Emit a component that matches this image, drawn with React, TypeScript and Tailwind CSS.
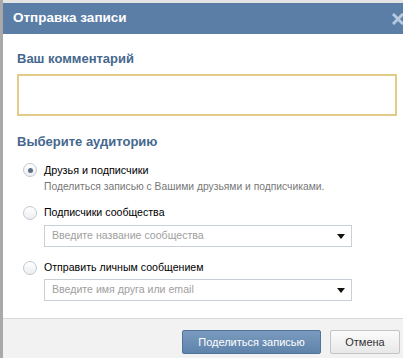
import React from 'react'

const font = { fontFamily: '"Liberation Sans", Arial, sans-serif' }

// Radio button circle, VK-style
const Radio = ({ checked }: { checked?: boolean }) => (
  <span className="flex h-[14px] w-[14px] shrink-0 items-center justify-center rounded-full border border-[#c3c8ce] bg-gradient-to-b from-[#ffffff] to-[#eceef1]">
    {checked && <span className="h-[5px] w-[5px] rounded-full bg-[#5c6f85]" />}
  </span>
)

const FakeSelect = ({ placeholder }: { placeholder: string }) => (
  <div className="flex h-[22px] w-[308px] items-center justify-between border border-[#c9cfd6] bg-white pl-[7px] pr-[6px]">
    <span className="text-[10.6px] text-[#a0a0a0]">{placeholder}</span>
    <svg width="8" height="5" viewBox="0 0 8 5">
      <path d="M0 0 H8 L4 5 Z" fill="#111" />
    </svg>
  </div>
)

export default function App() {
  return (
    <div className="h-[358px] w-[403px] overflow-hidden bg-[#e4e4e4]" style={font}>
      <div className="flex h-full">
        {/* page behind the dim */}
        <div className="w-[3px] shrink-0 bg-[#a9a9a9]" />
        <div className="flex flex-col pt-[3px]">
          <div className="flex w-[407px] grow flex-col bg-white">
            {/* Header */}
            <div className="flex h-[31px] items-center justify-between bg-[#5b7ea6] pl-[10px] pr-[6px]">
              <span className="text-[13.5px] font-bold text-white">Отправка записи</span>
              <svg width="12" height="12" viewBox="0 0 12 12">
                <path d="M2 2 L10 10 M10 2 L2 10" stroke="#b7c9de" strokeWidth="3" strokeLinecap="square" />
              </svg>
            </div>

            {/* Body */}
            <div className="flex flex-col pb-[17px] pl-[14px] pr-[13px] pt-[17px]">
              <div className="text-[13px] font-bold leading-[16px] text-[#45688e]">Ваш комментарий</div>
              <div className="mt-[7px] h-[42px] w-[380px] border-2 border-[#e3cb88] bg-white" />

              <div className="mt-[18px] text-[13px] font-bold leading-[16px] text-[#45688e]">Выберите аудиторию</div>

              <div className="mt-[13px] flex flex-col pl-[6px]">
                <div className="flex h-[14px] items-center gap-[7px]">
                  <Radio checked />
                  <span className="text-[10.8px] text-black">Друзья и подписчики</span>
                </div>
                <div className="mt-[3px] pl-[21px] text-[10.3px] leading-[14px] text-[#777]">
                  Поделиться записью с Вашими друзьями и подписчиками.
                </div>

                <div className="mt-[12px] flex h-[14px] items-center gap-[7px]">
                  <Radio />
                  <span className="text-[10.6px] text-black">Подписчики сообщества</span>
                </div>
                <div className="mt-[5px] pl-[21px]">
                  <FakeSelect placeholder="Введите название сообщества" />
                </div>

                <div className="mt-[14px] flex h-[14px] items-center gap-[7px]">
                  <Radio />
                  <span className="text-[10.6px] text-black">Отправить личным сообщением</span>
                </div>
                <div className="mt-[4px] pl-[21px]">
                  <FakeSelect placeholder="Введите имя друга или email" />
                </div>
              </div>
            </div>

            {/* Footer */}
            <div className="flex grow justify-end gap-[9px] border-t border-[#d8d8d8] bg-[#f2f2f2] pr-[10px] pt-[11px]">
              <button className="h-[24px] w-[139px] rounded-[2px] border border-[#4f7399] bg-gradient-to-b from-[#7a9bbf] to-[#5f83aa] text-[11px] text-white">
                Поделиться записью
              </button>
              <button className="h-[24px] w-[70px] rounded-[2px] border border-[#c4c4c4] bg-gradient-to-b from-[#fbfbfb] to-[#e8e8e8] text-[11px] text-[#333]">
                Отмена
              </button>
            </div>
          </div>
        </div>
      </div>
    </div>
  )
}
